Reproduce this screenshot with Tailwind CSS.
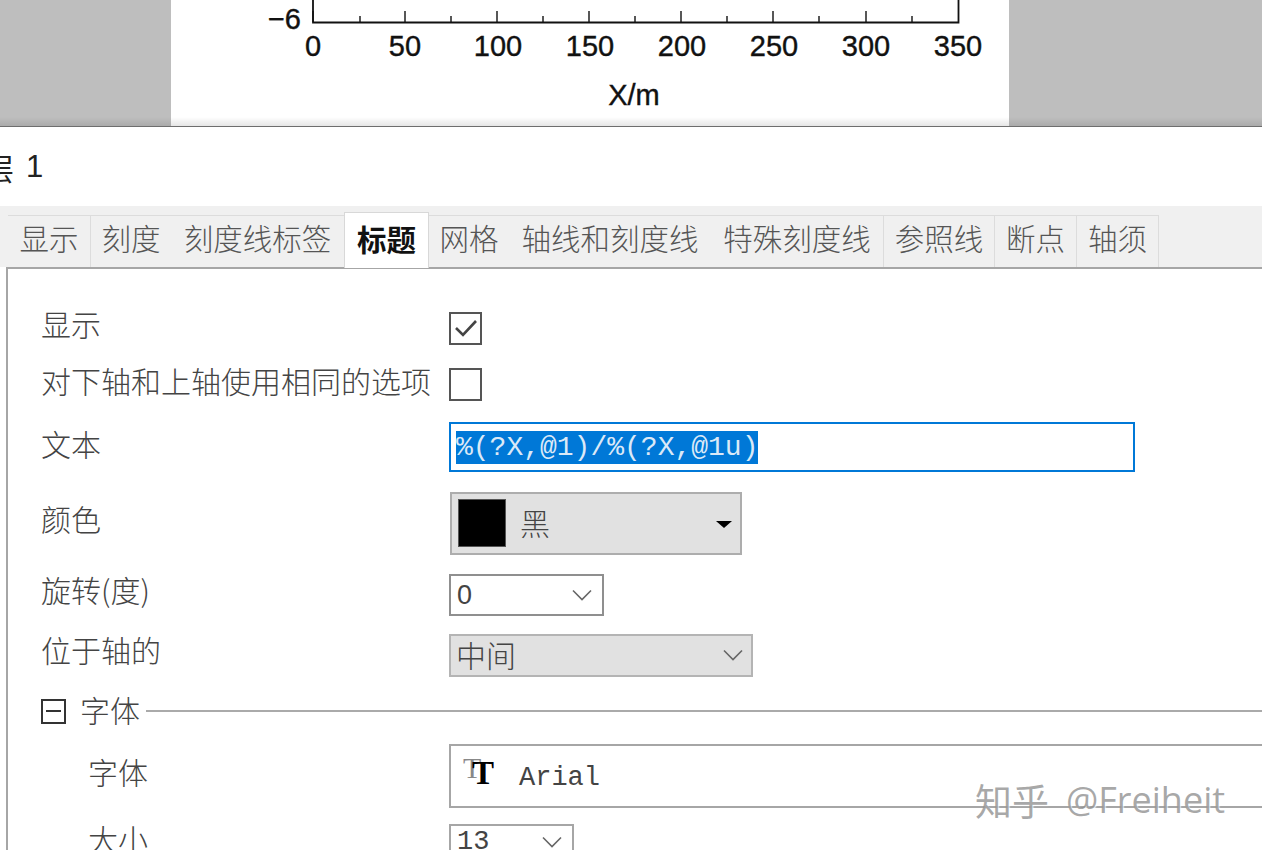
<!DOCTYPE html>
<html lang="zh-CN">
<head>
  <meta charset="UTF-8">
  <title>图层 1</title>
  <script src="https://cdn.jsdelivr.net/npm/@tailwindcss/browser@4"></script>
</head>
<body class="relative w-[1262px] h-[850px] overflow-hidden bg-white text-[30px] leading-none text-[#444] font-['Noto_Sans_CJK_SC','Liberation_Sans',sans-serif] font-light">

  <!-- Plot preview -->
  <div class="relative flex h-[127px] bg-[#bebebe] border-b border-[#6e6e6e]">
    <div class="ml-[171px] w-[838px] bg-white">
      <svg width="838" height="126" class="block" font-family="Liberation Sans, sans-serif" font-size="29" fill="#111" stroke="#111" stroke-width="0.400">
        <path d="M142 0V22.500H787.500V0" fill="none" stroke="#111" stroke-width="1.800"/>
        <path d="M142 11V22M234 11V22M326 11V22M418 11V22M510 11V22M602 11V22M695 11V22M189 16V22M280 16V22M372 16V22M464 16V22M556 16V22M648 16V22M741 16V22" stroke="#111" stroke-width="1.400"/>
        <text x="130" y="29" text-anchor="end">−6</text>
        <text x="142" y="56" text-anchor="middle">0</text>
        <text x="234" y="56" text-anchor="middle">50</text>
        <text x="327" y="56" text-anchor="middle">100</text>
        <text x="419" y="56" text-anchor="middle">150</text>
        <text x="511" y="56" text-anchor="middle">200</text>
        <text x="603" y="56" text-anchor="middle">250</text>
        <text x="695" y="56" text-anchor="middle">300</text>
        <text x="787" y="56" text-anchor="middle">350</text>
        <text x="463" y="105" text-anchor="middle">X/m</text>
      </svg>
    </div>
    <div class="absolute left-0 right-0 bottom-0 h-[9px] bg-linear-to-b from-transparent to-black/10"></div>
  </div>

  <!-- Layer name -->
  <div class="h-[79px] ml-[-16px] flex items-center gap-[12px] font-normal text-[#222]">
    <span>层</span><span class="font-['Liberation_Sans'] text-[31px]">1</span>
  </div>

  <!-- Tabs -->
  <div class="h-[61px] bg-[#f0f0f0] pt-[9px] pl-[8px] flex items-stretch">
    <div class="flex h-[52px] border-t border-[#dcdcdc] text-[#555] text-[29.5px]">
      <div class="w-[83px] pb-[8px] flex items-center justify-center border-r border-[#dcdcdc]">显示</div>
      <div class="w-[80px] pb-[8px] flex items-center justify-center">刻度</div>
      <div class="w-[173px] pb-[8px] flex items-center justify-center">刻度线标签</div>
      <div class="w-[85px] h-[56px] -mt-[4px] pb-[4px] bg-white border-t border-x border-[#d8d8d8] flex items-center justify-center font-bold text-[#111] relative z-10">标题</div>
      <div class="w-[80px] pb-[8px] flex items-center justify-center">网格</div>
      <div class="w-[202px] pb-[8px] flex items-center justify-center">轴线和刻度线</div>
      <div class="w-[173px] pb-[8px] flex items-center justify-center border-r border-[#dcdcdc]">特殊刻度线</div>
      <div class="w-[111px] pb-[8px] flex items-center justify-center border-r border-[#dcdcdc]">参照线</div>
      <div class="w-[82px] pb-[8px] flex items-center justify-center border-r border-[#dcdcdc]">断点</div>
      <div class="w-[82px] pb-[8px] flex items-center justify-center border-r border-[#dcdcdc]">轴须</div>
    </div>
  </div>

  <!-- Form -->
  <div class="ml-[6px] h-[583px] overflow-hidden border-l-2 border-t-2 border-[#a6a6a6] pt-[31px]">

    <div class="flex items-center h-[56px]">
      <div class="w-[441px] pl-[33px] pb-[10px]">显示</div>
      <div class="w-[33px] h-[33px] border-2 border-[#555] flex items-center justify-center">
        <svg width="24" height="20" viewBox="0 0 24 20"><path d="M2 10l7 7L22 3" fill="none" stroke="#444" stroke-width="2.600"/></svg>
      </div>
    </div>

    <div class="flex items-center h-[56px]">
      <div class="w-[441px] pl-[33px] pb-[8px] whitespace-nowrap">对下轴和上轴使用相同的选项</div>
      <div class="w-[33px] h-[33px] border-2 border-[#555]"></div>
    </div>

    <div class="flex items-center h-[70px]">
      <div class="w-[441px] pl-[33px] pb-[8px]">文本</div>
      <div class="w-[686px] h-[50px] border-2 border-[#0078d7] pl-[5px] pt-[3px]">
        <span class="inline-block h-[33px] leading-[33px] bg-[#0078d7] text-[#dbe9f7] text-[28px] font-normal font-['Liberation_Mono',monospace]">%(?X,@1)/%(?X,@1u)</span>
      </div>
    </div>

    <div class="flex items-center h-[82px]">
      <div class="w-[441px] pl-[33px] pb-[10px]">颜色</div>
      <div class="w-[292px] h-[63px] ml-[1px] bg-[#e1e1e1] border-2 border-[#adadad] flex items-center pl-[6px] pr-[8px]">
        <div class="w-[48px] h-[48px] bg-black border border-[#555]"></div>
        <div class="ml-[14px] flex-1 pb-[2px]">黑</div>
        <div class="w-0 h-0 border-x-[8px] border-x-transparent border-t-[7px] border-t-black mt-[2px]"></div>
      </div>
    </div>

    <div class="flex items-center h-[62px]">
      <div class="w-[441px] pl-[33px] pb-[12px]">旋转(度)</div>
      <div class="w-[155px] h-[42px] border-2 border-[#8f8f8f] flex items-center justify-between pl-[6px] pr-[10px] text-[27px] font-normal font-['Liberation_Sans',sans-serif]">
        0
        <svg width="20" height="12" viewBox="0 0 20 12"><path d="M1 1.500l9 9 9-9" fill="none" stroke="#666" stroke-width="1.600"/></svg>
      </div>
    </div>

    <div class="flex items-center h-[58px]">
      <div class="w-[441px] pl-[33px] pb-[12px]">位于轴的</div>
      <div class="w-[304px] h-[43px] bg-[#e1e1e1] border-2 border-[#b4b4b4] flex items-center justify-between pl-[5px] pr-[8px]">
        <span class="pb-[2px]">中间</span>
        <svg width="20" height="12" viewBox="0 0 20 12"><path d="M1 1.500l9 9 9-9" fill="none" stroke="#666" stroke-width="1.600"/></svg>
      </div>
    </div>

    <div class="flex items-center h-[54px] pl-[33px]">
      <div class="w-[25px] h-[25px] border-2 border-[#333] flex items-center justify-center">
        <div class="w-[15px] h-[2px] bg-[#333]"></div>
      </div>
      <div class="ml-[14px] pb-[4px]">字体</div>
      <div class="ml-[6px] flex-1 h-[2px] bg-[#aaa]"></div>
    </div>

    <div class="flex items-center h-[75px]">
      <div class="w-[441px] pl-[80px] pb-[10px]">字体</div>
      <div class="flex-1 h-[64px] border-2 border-r-0 border-[#a6a6a6] flex items-center pl-[12px]">
        <div class="relative w-[34px] h-[34px] font-['Liberation_Serif',serif]">
          <span class="absolute left-0 top-[-6px] text-[30px] font-normal text-[#888]">T</span>
          <span class="absolute left-[9px] top-[-2px] text-[33px] font-bold text-black">T</span>
        </div>
        <span class="ml-[22px] mt-[5px] text-[27px] font-normal font-['Liberation_Mono',monospace]">Arial</span>
      </div>
    </div>

    <div class="flex items-center h-[58px]">
      <div class="w-[441px] pl-[80px] pb-[8px]">大小</div>
      <div class="w-[125px] h-[36px] border-2 border-[#a6a6a6] flex items-center justify-between pl-[6px] pr-[10px] text-[27px] font-normal font-['Liberation_Mono',monospace]">
        13
        <svg width="20" height="12" viewBox="0 0 20 12"><path d="M1 1.500l9 9 9-9" fill="none" stroke="#666" stroke-width="1.600"/></svg>
      </div>
    </div>
  </div>

  <!-- Watermark -->
  <div class="absolute left-[975px] top-[780px] flex items-center gap-[17px] text-[#8c8c8c]/75 font-normal text-[37px] leading-[40px] whitespace-nowrap [text-shadow:1px_1px_1px_rgba(255,255,255,0.8)]">
    <span>知乎</span><span class="font-['Open_Sans',sans-serif] text-[36px]">@Freiheit</span>
  </div>
</body>
</html>
